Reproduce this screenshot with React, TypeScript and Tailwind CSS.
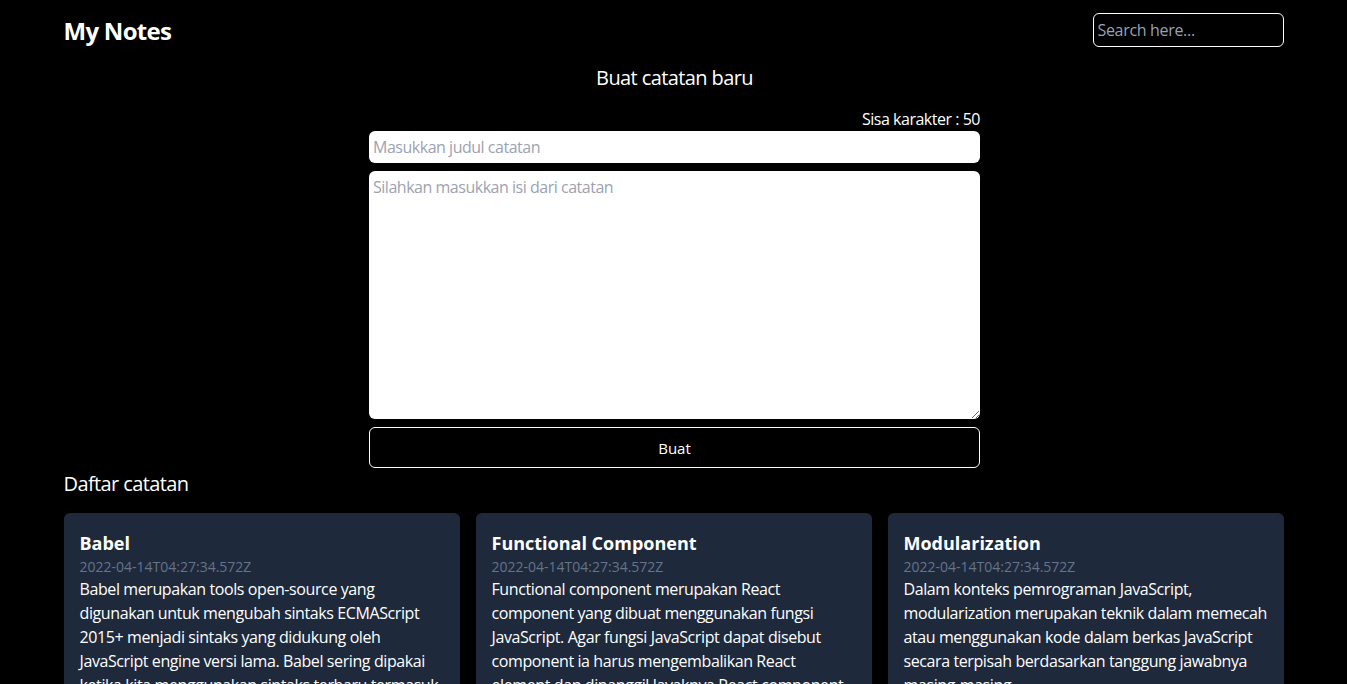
import { useState } from 'react'

const notes = [
  {
    id: 1,
    title: 'Babel',
    createdAt: '2022-04-14T04:27:34.572Z',
    body: 'Babel merupakan tools open-source yang digunakan untuk mengubah sintaks ECMAScript 2015+ menjadi sintaks yang didukung oleh JavaScript engine versi lama. Babel sering dipakai ketika kita menggunakan sintaks terbaru termasuk sintaks JSX.',
  },
  {
    id: 2,
    title: 'Functional Component',
    createdAt: '2022-04-14T04:27:34.572Z',
    body: 'Functional component merupakan React component yang dibuat menggunakan fungsi JavaScript. Agar fungsi JavaScript dapat disebut component ia harus mengembalikan React element dan dipanggil layaknya React component.',
  },
  {
    id: 3,
    title: 'Modularization',
    createdAt: '2022-04-14T04:27:34.572Z',
    body: 'Dalam konteks pemrograman JavaScript, modularization merupakan teknik dalam memecah atau menggunakan kode dalam berkas JavaScript secara terpisah berdasarkan tanggung jawabnya masing-masing.',
  },
]

function NoteItem({ title, createdAt, body }: { title: string; createdAt: string; body: string }) {
  return (
    <div className="rounded-md bg-[#1e293b] px-4 pt-4 pb-4">
      <h3 className="text-lg font-bold leading-7">{title}</h3>
      <p className="text-sm leading-5 text-[#64748b]">{createdAt}</p>
      <p className="text-base leading-6 tracking-[-0.025em]">{body}</p>
    </div>
  )
}

export default function App() {
  const [title, setTitle] = useState('')
  const [body, setBody] = useState('')
  return (
    <div className="min-h-screen bg-black text-white font-['Open_Sans',sans-serif]">
      <div className="mx-auto w-[1220px]">
        <header className="flex items-center justify-between pt-[13px]">
          <h1 className="pt-[2px] text-2xl font-bold tracking-[-0.03em]">My Notes</h1>
          <input
            className="h-[34px] w-[191px] rounded-md border border-white bg-transparent px-1 text-base tracking-[-0.02em] placeholder:text-[#94a3b8] outline-none"
            placeholder="Search here..."
          />
        </header>
        <main>
          <div className="mt-[17px] flex justify-center pl-[2px]">
            <div className="w-[611px]">
              <h2 className="text-center text-xl leading-7 tracking-[-0.03em]">Buat catatan baru</h2>
              <p className="mt-[15px] text-right leading-6 tracking-[-0.03em]">Sisa karakter : {50 - title.length}</p>
              <form className="flex flex-col gap-2" onSubmit={(e) => e.preventDefault()}>
                <input
                  className="h-8 rounded-md bg-white px-1 text-base tracking-[-0.03em] text-black placeholder:text-[#9ca3af] outline-none"
                  placeholder="Masukkan judul catatan"
                  value={title}
                  onChange={(e) => setTitle(e.target.value.slice(0, 50))}
                />
                <textarea
                  className="h-[248px] rounded-md bg-white px-1 pt-1 text-base tracking-[-0.03em] text-black placeholder:text-[#9ca3af] outline-none"
                  placeholder="Silahkan masukkan isi dari catatan"
                  value={body}
                  onChange={(e) => setBody(e.target.value)}
                />
                <button className="h-[41px] rounded-md border border-white pt-[1px] text-[15px]">Buat</button>
              </form>
            </div>
          </div>
          <h2 className="mt-[2px] text-xl leading-7 tracking-[-0.03em]">Daftar catatan</h2>
          <div className="mt-[15px] grid grid-cols-3 gap-4 pb-8">
            {notes.map((note) => (
              <NoteItem key={note.id} {...note} />
            ))}
          </div>
        </main>
      </div>
    </div>
  )
}
